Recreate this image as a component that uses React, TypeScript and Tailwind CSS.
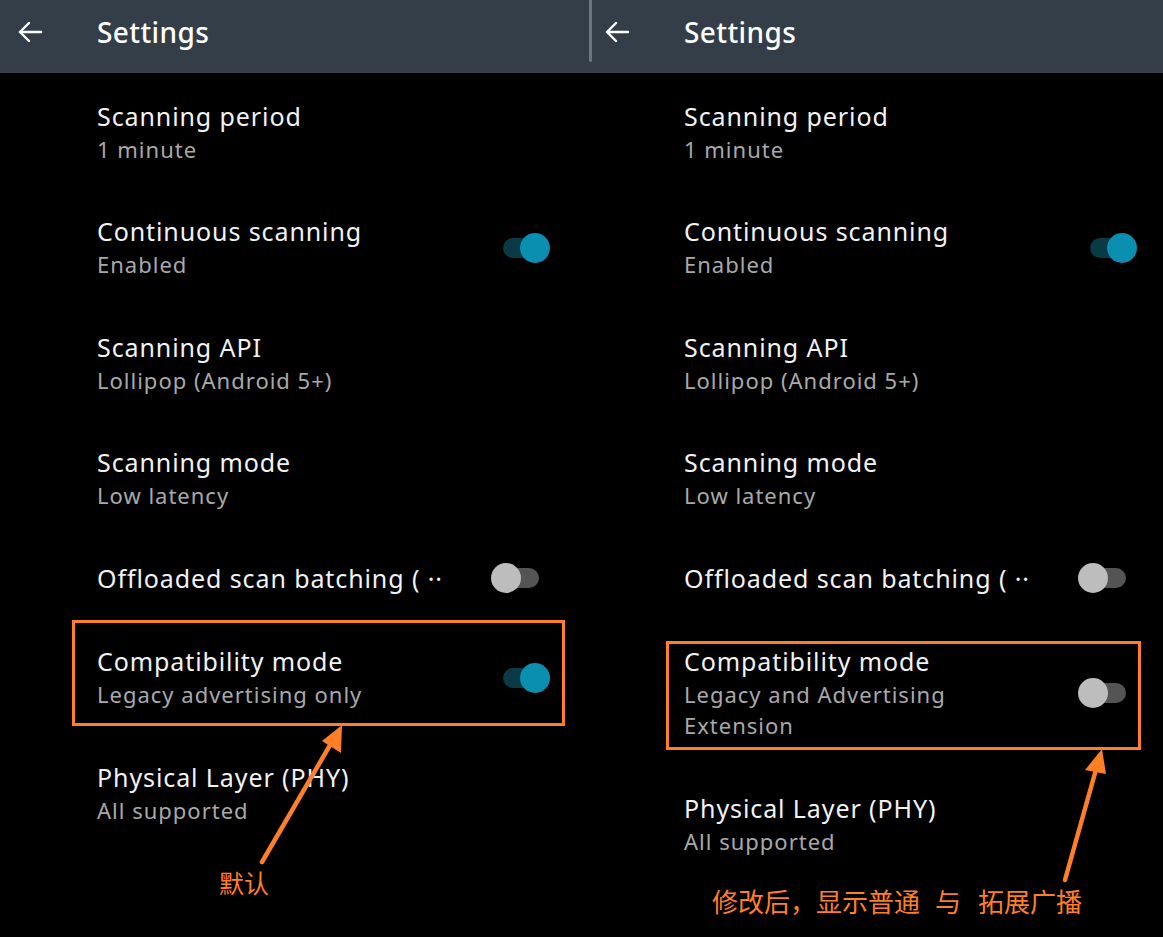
import React from 'react';

type Item = {
  title: string;
  lines?: string[];
  toggle?: 'on' | 'off';
};

const leftItems: Item[] = [
  { title: 'Scanning period', lines: ['1 minute'] },
  { title: 'Continuous scanning', lines: ['Enabled'], toggle: 'on' },
  { title: 'Scanning API', lines: ['Lollipop (Android 5+)'] },
  { title: 'Scanning mode', lines: ['Low latency'] },
  { title: 'Offloaded scan batching ( ··', toggle: 'off' },
  { title: 'Compatibility mode', lines: ['Legacy advertising only'], toggle: 'on' },
  { title: 'Physical Layer (PHY)', lines: ['All supported'] },
];

const rightItems: Item[] = [
  { title: 'Scanning period', lines: ['1 minute'] },
  { title: 'Continuous scanning', lines: ['Enabled'], toggle: 'on' },
  { title: 'Scanning API', lines: ['Lollipop (Android 5+)'] },
  { title: 'Scanning mode', lines: ['Low latency'] },
  { title: 'Offloaded scan batching ( ··', toggle: 'off' },
  { title: 'Compatibility mode', lines: ['Legacy and Advertising', 'Extension'], toggle: 'off' },
  { title: 'Physical Layer (PHY)', lines: ['All supported'] },
];

const Toggle = ({ on }: { on: boolean }) => (
  <div className="relative h-[30px] w-[60px] shrink-0">
    <div
      className={`absolute left-[12px] top-[5px] h-[20px] w-[36px] rounded-full ${
        on ? 'bg-[#0b3a47]' : 'bg-[#545454]'
      }`}
    />
    <div
      className={`absolute top-0 h-[30px] w-[30px] rounded-full ${
        on ? 'left-[29px] bg-[#0a8fb1]' : 'left-0 bg-[#bdbdbd]'
      }`}
    />
  </div>
);

const Row = ({ item }: { item: Item }) => (
  <div className="flex items-center pl-[97px] pr-[36px]">
    <div className="flex-1 min-w-0">
      <div className="h-[33px] text-[25px] leading-[33px] tracking-[0.9px] text-[#f2f2f2] whitespace-nowrap">
        {item.title}
      </div>
      {item.lines && (
        <div className="mt-[1px]">
          {item.lines.map((l) => (
            <div key={l} className="h-[31px] text-[22px] leading-[31px] tracking-[1px] text-[#a9a9a9] whitespace-nowrap">
              {l}
            </div>
          ))}
        </div>
      )}
    </div>
    {item.toggle && <Toggle on={item.toggle === 'on'} />}
  </div>
);

const Header = () => (
  <div className="flex h-[73px] items-center bg-[#333e48] pb-[9px]">
    <div className="flex w-[97px] items-center pl-[17px]">
      <svg width="26" height="24" viewBox="0 0 26 24" fill="none" stroke="#ffffff" strokeWidth="2.4" strokeLinecap="round" strokeLinejoin="round">
        <path d="M24 12H3" />
        <path d="M12 3L3 12l9 9" />
      </svg>
    </div>
    <span className="text-[28px] font-medium tracking-[0.4px] text-white">Settings</span>
  </div>
);

const Panel = ({ items, bar }: { items: Item[]; bar?: boolean }) => (
  <div className="relative flex h-full w-[587px] shrink-0 flex-col">
    <Header />
    {bar && <div className="absolute left-[2px] top-0 h-[62px] w-[3px] rounded-b-full bg-[#6b7680]" />}
    <div className="flex flex-col gap-[50.5px] pt-[26.5px]">
      {items.map((it) => (
        <Row key={it.title} item={it} />
      ))}
    </div>
  </div>
);

export default function App() {
  return (
    <div
      className="relative h-[937px] w-[1163px] overflow-hidden bg-black"
      style={{ fontFamily: '"Noto Sans", "Open Sans", sans-serif' }}
    >
      <div className="flex h-full">
        <Panel items={leftItems} />
        <Panel items={rightItems} bar />
      </div>

      {/* annotation boxes */}
      <div className="absolute left-[72px] top-[620px] h-[106px] w-[493px] border-[3px] border-[#ff7f27]" />
      <div className="absolute left-[666px] top-[641px] h-[109px] w-[475px] border-[3px] border-[#ff7f27]" />

      {/* arrows */}
      <svg className="absolute left-0 top-0" width="1163" height="937" viewBox="0 0 1163 937">
        <line x1="262" y1="862" x2="333" y2="740" stroke="#ff7f27" strokeWidth="4.5" strokeLinecap="round" />
        <polygon points="342,725 322,741 341,753" fill="#ff7f27" />
        <line x1="1065" y1="880" x2="1097" y2="766" stroke="#ff7f27" strokeWidth="4.5" strokeLinecap="round" />
        <polygon points="1102,749 1085,770 1106,774" fill="#ff7f27" />
      </svg>

      <div
        className="absolute left-[219px] top-[867px] text-[25px] leading-[30px] text-[#ff7f27]"
        style={{ fontFamily: '"Noto Sans CJK SC", sans-serif' }}
      >
        默认
      </div>
      <div
        className="absolute left-[712px] top-[886px] flex whitespace-nowrap text-[26px] leading-[30px] text-[#ff7f27]"
        style={{ fontFamily: '"Noto Sans CJK SC", sans-serif' }}
      >
        <span>修改后，显示普通</span>
        <span className="ml-[15px]">与</span>
        <span className="ml-[17px]">拓展广播</span>
      </div>
    </div>
  );
}
